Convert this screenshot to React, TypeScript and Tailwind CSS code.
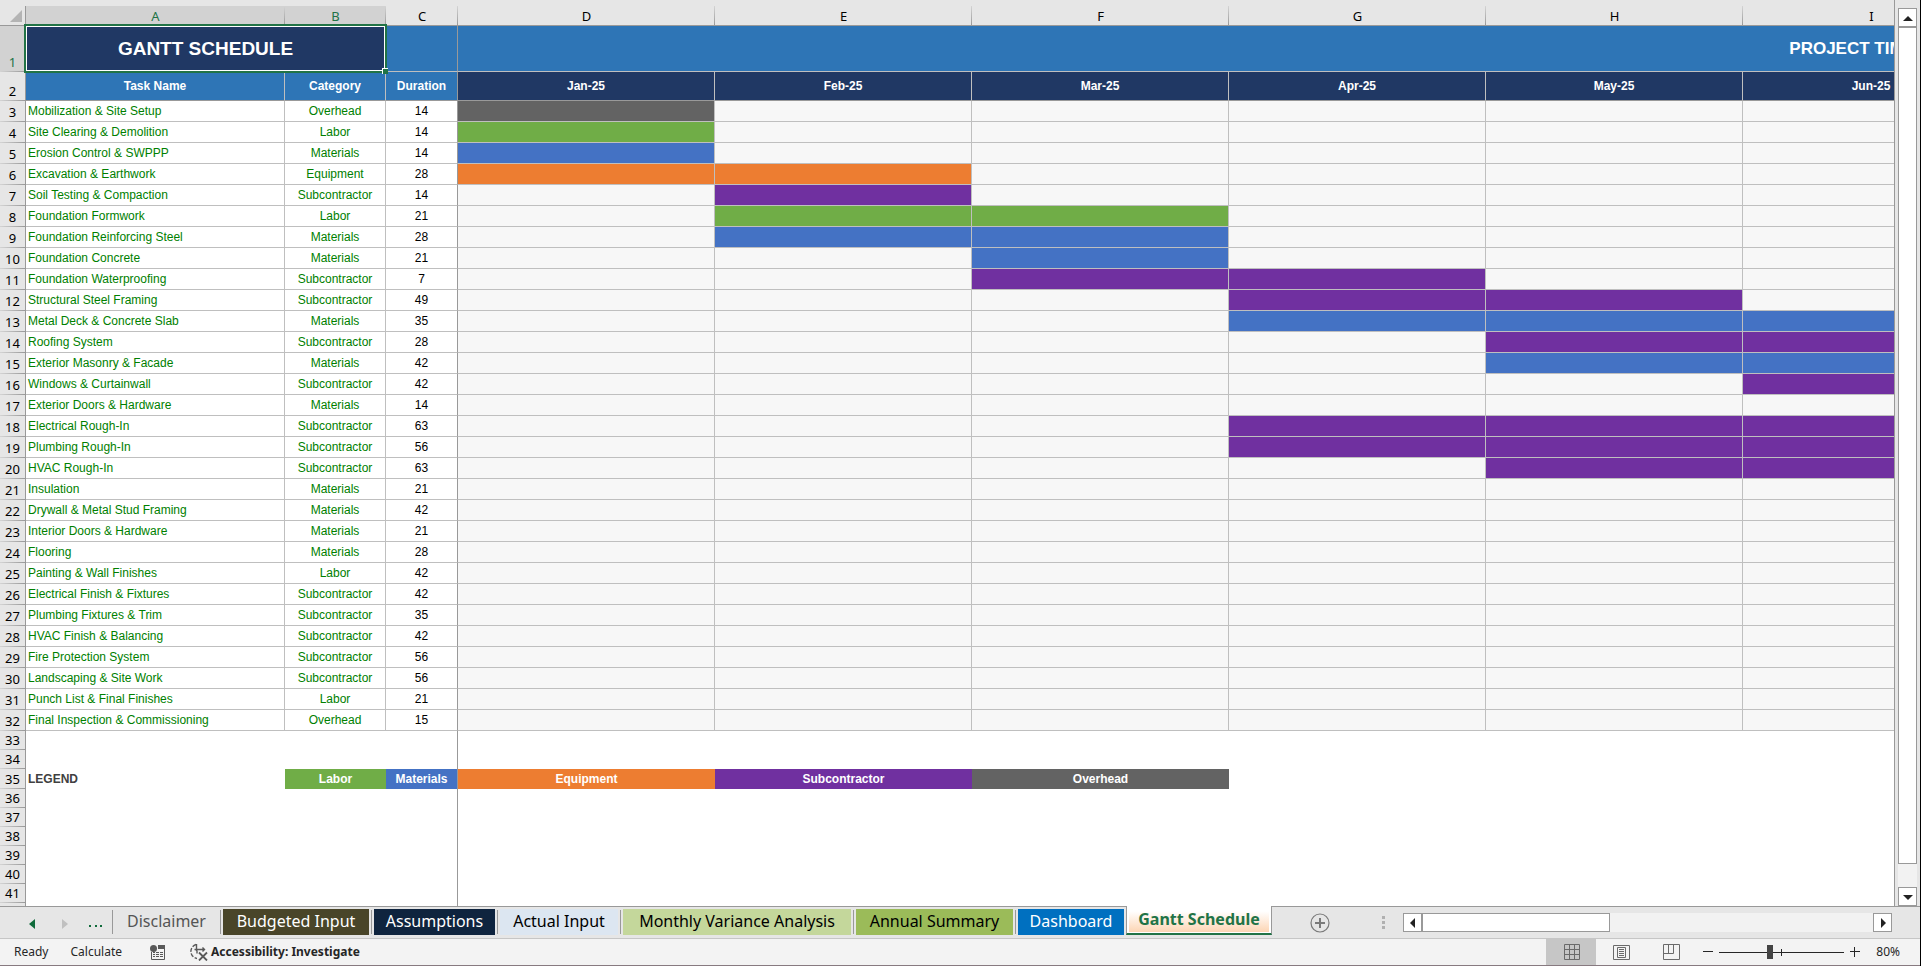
import type { ReactNode } from "react"
import { clsx } from "clsx"

type Category = "Labor" | "Materials" | "Equipment" | "Subcontractor" | "Overhead"

type Task = {
  name: string
  category: Category
  duration: number
  // first and last month column that the bar covers
  bar?: [number, number]
}

const fills: Record<Category, string> = {
  Labor: "bg-[#70ad47]",
  Materials: "bg-[#4472c4]",
  Equipment: "bg-[#ed7d31]",
  Subcontractor: "bg-[#7030a0]",
  Overhead: "bg-[#636363]",
}

const months = ["Jan-25", "Feb-25", "Mar-25", "Apr-25", "May-25", "Jun-25"]
const columns = ["A", "B", "C", "D", "E", "F", "G", "H", "I"]

const tasks: Task[] = [
  { name: "Mobilization & Site Setup", category: "Overhead", duration: 14, bar: [0, 0] },
  { name: "Site Clearing & Demolition", category: "Labor", duration: 14, bar: [0, 0] },
  { name: "Erosion Control & SWPPP", category: "Materials", duration: 14, bar: [0, 0] },
  { name: "Excavation & Earthwork", category: "Equipment", duration: 28, bar: [0, 1] },
  { name: "Soil Testing & Compaction", category: "Subcontractor", duration: 14, bar: [1, 1] },
  { name: "Foundation Formwork", category: "Labor", duration: 21, bar: [1, 2] },
  { name: "Foundation Reinforcing Steel", category: "Materials", duration: 28, bar: [1, 2] },
  { name: "Foundation Concrete", category: "Materials", duration: 21, bar: [2, 2] },
  { name: "Foundation Waterproofing", category: "Subcontractor", duration: 7, bar: [2, 3] },
  { name: "Structural Steel Framing", category: "Subcontractor", duration: 49, bar: [3, 4] },
  { name: "Metal Deck & Concrete Slab", category: "Materials", duration: 35, bar: [3, 5] },
  { name: "Roofing System", category: "Subcontractor", duration: 28, bar: [4, 5] },
  { name: "Exterior Masonry & Facade", category: "Materials", duration: 42, bar: [4, 5] },
  { name: "Windows & Curtainwall", category: "Subcontractor", duration: 42, bar: [5, 5] },
  { name: "Exterior Doors & Hardware", category: "Materials", duration: 14 },
  { name: "Electrical Rough-In", category: "Subcontractor", duration: 63, bar: [3, 5] },
  { name: "Plumbing Rough-In", category: "Subcontractor", duration: 56, bar: [3, 5] },
  { name: "HVAC Rough-In", category: "Subcontractor", duration: 63, bar: [4, 5] },
  { name: "Insulation", category: "Materials", duration: 21 },
  { name: "Drywall & Metal Stud Framing", category: "Materials", duration: 42 },
  { name: "Interior Doors & Hardware", category: "Materials", duration: 21 },
  { name: "Flooring", category: "Materials", duration: 28 },
  { name: "Painting & Wall Finishes", category: "Labor", duration: 42 },
  { name: "Electrical Finish & Fixtures", category: "Subcontractor", duration: 42 },
  { name: "Plumbing Fixtures & Trim", category: "Subcontractor", duration: 35 },
  { name: "HVAC Finish & Balancing", category: "Subcontractor", duration: 42 },
  { name: "Fire Protection System", category: "Subcontractor", duration: 56 },
  { name: "Landscaping & Site Work", category: "Subcontractor", duration: 56 },
  { name: "Punch List & Final Finishes", category: "Labor", duration: 21 },
  { name: "Final Inspection & Commissioning", category: "Overhead", duration: 15 },
]

const tabs = [
  { name: "Disclaimer", style: "w-[103px] text-[#555]" },
  { name: "Budgeted Input", style: "w-[146px] bg-[#494529] text-white" },
  { name: "Assumptions", style: "w-[121px] bg-[#0f243e] text-white" },
  { name: "Actual Input", style: "w-[118px] bg-[#dce6f1] text-black" },
  { name: "Monthly Variance Analysis", style: "w-[228px] bg-[#c4d79b] text-black" },
  { name: "Annual Summary", style: "w-[157px] bg-[#9bbb59] text-black" },
  { name: "Dashboard", style: "w-[106px] bg-[#0070c0] text-white" },
]

function RowHead({ n, active }: { n?: number; active?: boolean }) {
  return (
    <th
      scope="row"
      className={clsx(
        "border-r border-[#999] bg-[linear-gradient(to_right,#d4d4d4,#999)] bg-[length:100%_1px] bg-bottom bg-no-repeat p-0 pb-px align-bottom font-['Noto_Sans',sans-serif] text-[13px] leading-[18px] font-normal",
        active ? "bg-[#d2d2d2] text-[#217346]" : "bg-[#e6e6e6] text-black"
      )}
    >
      {n}
    </th>
  )
}

function EmptyRow({ n }: { n?: number }) {
  return (
    <tr className="h-[19px]">
      <RowHead n={n} />
      <td colSpan={3} className="border-r border-[#999] p-0" />
      <td colSpan={6} className="p-0" />
    </tr>
  )
}

function Sheet() {
  return (
    <table className="w-[2000px] table-fixed border-separate border-spacing-0 bg-white text-center text-xs leading-4">
      <colgroup>
        <col className="w-[26px]" />
        <col className="w-[259px]" />
        <col className="w-[101px]" />
        <col className="w-[72px]" />
        {months.map((m) => (
          <col key={m} className="w-[257px]" />
        ))}
      </colgroup>
      <thead>
        <tr className="h-5 font-['Noto_Sans',sans-serif] text-[13px]">
          <td className="border-r border-b border-[#999] bg-[#e6e6e6] p-0">
            <svg viewBox="0 0 12 12" className="ml-auto mr-[3px] size-3" fill="#b4b4b4">
              <path d="M12 0v12H0z" />
            </svg>
          </td>
          {columns.map((c, i) => (
            <th
              key={c}
              scope="col"
              className={clsx(
                "border-b border-[#999] bg-[linear-gradient(to_bottom,#d4d4d4,#999)] bg-[length:1px_100%] bg-right bg-no-repeat p-0 font-normal",
                i < 2 ? "bg-[#d2d2d2] text-[#217346]" : "bg-[#e6e6e6] text-black"
              )}
            >
              {c}
            </th>
          ))}
        </tr>
      </thead>
      <tbody>
        <tr className="h-[46px] text-white">
          <RowHead n={1} active />
          <td colSpan={2} className="relative border-r border-b border-[#bfbfbf] bg-[#203864] p-0 text-[19px] font-bold">
            GANTT SCHEDULE
            {/* selection frame and fill handle */}
            <div className="absolute -inset-0.5 z-10 border-2 border-[#217346]">
              <div className="absolute inset-0 border border-white" />
              <div className="absolute -right-[3px] -bottom-[3px] size-1.5 border-t border-l border-white bg-[#217346]" />
            </div>
          </td>
          <td className="border-r border-b border-r-[#999] border-b-[#bfbfbf] bg-[#2e75b6] p-0" />
          <td colSpan={5} className="border-b border-[#bfbfbf] bg-[#2e75b6] p-0" />
          <td className="border-b border-[#bfbfbf] bg-[#2e75b6] p-0 text-[17px] font-bold">PROJECT TIMELINE</td>
        </tr>
        <tr className="h-[29px] font-bold text-white">
          <RowHead n={2} />
          <td className="border-r border-b border-r-[#bfbfbf] border-b-[#999] bg-[#2e75b6] p-0">Task Name</td>
          <td className="border-r border-b border-r-[#bfbfbf] border-b-[#999] bg-[#2e75b6] p-0">Category</td>
          <td className="border-r border-b border-[#999] bg-[#2e75b6] p-0">Duration</td>
          {months.map((m) => (
            <td key={m} className="border-r border-b border-r-[#bfbfbf] border-b-[#999] bg-[#203864] p-0">
              {m}
            </td>
          ))}
        </tr>
        {tasks.map((t, row) => (
          <tr key={t.name} className="h-[21px]">
            <RowHead n={row + 3} />
            <td className="border-r border-b border-[#bfbfbf] p-0 pl-0.5 text-left text-[#008000]">{t.name}</td>
            <td className="border-r border-b border-[#bfbfbf] p-0 text-[#008000]">{t.category}</td>
            <td className="border-r border-b border-r-[#999] border-b-[#bfbfbf] p-0 text-black">{t.duration}</td>
            {months.map((m, i) => (
              <td
                key={m}
                className={clsx(
                  "border-r border-b border-[#bfbfbf] p-0",
                  t.bar && i >= t.bar[0] && i <= t.bar[1] ? fills[t.category] : "bg-[#f7f7f7]"
                )}
              />
            ))}
          </tr>
        ))}
        <EmptyRow n={33} />
        <EmptyRow n={34} />
        <tr className="h-5 font-bold text-white">
          <RowHead n={35} />
          <td className="p-0 pl-0.5 text-left text-[#404040]">LEGEND</td>
          <td className="bg-[#70ad47] p-0">Labor</td>
          <td className="border-r border-[#999] bg-[#4472c4] p-0">Materials</td>
          <td className="bg-[#ed7d31] p-0">Equipment</td>
          <td className="bg-[#7030a0] p-0">Subcontractor</td>
          <td className="bg-[#636363] p-0">Overhead</td>
          <td colSpan={3} className="p-0" />
        </tr>
        {[36, 37, 38, 39, 40, 41].map((n) => (
          <EmptyRow key={n} n={n} />
        ))}
        <EmptyRow />
      </tbody>
    </table>
  )
}

function ScrollButton({ label, d }: { label: string; d: string }) {
  return (
    <button aria-label={label} className="flex size-[19px] shrink-0 items-center justify-center border border-[#999] bg-white">
      <svg viewBox="0 0 10 10" className="size-2.5" fill="#222">
        <path d={d} />
      </svg>
    </button>
  )
}

function VerticalScroll() {
  return (
    <div className="flex w-[26px] flex-col border-l border-[#999] bg-[#e6e6e6] pt-2 pl-[3px]">
      <ScrollButton label="Scroll up" d="M0 8 5 3l5 5z" />
      <div className="flex w-[19px] flex-1 flex-col bg-[#f2f2f2] pb-[23px]">
        <div className="flex-1 border border-[#999] bg-white" />
      </div>
      <ScrollButton label="Scroll down" d="M0 3h10L5 8z" />
    </div>
  )
}

function Divider() {
  return <span className="mx-0.5 mt-[3px] h-6 w-px shrink-0 bg-[#999]" />
}

function TabBar() {
  return (
    <div className="flex h-8 shrink-0 border-t border-[#999] bg-[#e6e6e6] text-base leading-6">
      <div className="flex w-[110px] shrink-0 items-center pt-0.5 pl-[29px]">
        <button aria-label="Previous sheets">
          <svg viewBox="0 0 6 10" className="h-2.5 w-1.5" fill="#0f6b3b">
            <path d="M6 0v10L0 5z" />
          </svg>
        </button>
        <button aria-label="Next sheets" className="ml-[27px]">
          <svg viewBox="0 0 6 10" className="h-2.5 w-1.5" fill="#c0c0c0">
            <path d="M0 0v10l6-5z" />
          </svg>
        </button>
        <button aria-label="More sheets" className="ml-[21px]">
          <svg viewBox="0 0 14 10" className="h-2.5 w-3.5" fill="#0f6b3b">
            <path d="M0 6h2v2H0zM6 6h2v2H6zM11 6h2v2h-2z" />
          </svg>
        </button>
      </div>
      {tabs.map((t) => (
        <div key={t.name} className="flex shrink-0">
          <Divider />
          <button className={clsx("mt-0.5 h-[26px] pb-1 whitespace-nowrap", t.style)}>{t.name}</button>
        </div>
      ))}
      <button className="-mt-px ml-0.5 h-[29px] w-[146px] shrink-0 border-x border-b-2 border-x-[#999] border-b-[#217346] bg-white px-0.5 pb-px font-bold whitespace-nowrap text-[#217346]">
        <span className="block bg-linear-to-b from-white from-20% to-[#fcd5b4] py-px">Gantt Schedule</span>
      </button>
      <button aria-label="New sheet" className="ml-[38px] shrink-0">
        <svg viewBox="0 0 20 20" className="size-5" fill="none" stroke="#7a7a7a">
          <circle cx="10" cy="10" r="9" strokeWidth="1.2" />
          <path d="M10 5v10M5 10h10" strokeWidth="2" />
        </svg>
      </button>
      <svg viewBox="0 0 4 14" className="mt-[9px] ml-[52px] h-3.5 w-1 shrink-0" fill="#b0b0b0">
        <path d="M0 0h3v3H0zM0 5h3v3H0zM0 10h3v3H0z" />
      </svg>
      <div className="mt-1.5 mr-7 ml-[17px] flex h-[19px] flex-1 bg-[#f2f2f2]">
        <ScrollButton label="Scroll left" d="M7 0v10L2 5z" />
        <div className="w-[188px] border border-[#999] bg-white" />
        <div className="flex-1" />
        <ScrollButton label="Scroll right" d="M3 0v10l5-5z" />
      </div>
    </div>
  )
}

function ViewButton({ label, active, children }: { label: string; active?: boolean; children: ReactNode }) {
  return (
    <button
      aria-label={label}
      className={clsx("flex h-full w-[50px] items-center justify-center", active && "bg-[#c6c6c6]")}
    >
      <svg viewBox="0 0 17 16" className="h-4 w-[17px]" fill="none" stroke="#6a6a6a">
        {children}
      </svg>
    </button>
  )
}

function StatusBar() {
  return (
    <div className="flex h-7 shrink-0 items-center border-t border-b border-t-[#c6c6c6] border-b-[#877a80] bg-[#f3f3f3] text-xs text-[#262626]">
      <span className="ml-3.5">Ready</span>
      <span className="ml-[22px]">Calculate</span>
      <button aria-label="Record macro" className="ml-7">
        <svg viewBox="0 0 15 15" className="size-[15px]" fill="none" stroke="#595959">
          <path d="M1.500 7v7.500h13V1.500" />
          <path d="M8 0h7v4H8z" fill="#595959" stroke="none" />
          <circle cx="3.500" cy="3.500" r="3.500" fill="#595959" stroke="none" />
          <path d="M3 7.500h2M6 7.500h3M10 7.500h3M3 9.500h2M6 9.500h3M10 9.500h3M3 11.500h2M6 11.500h3M10 11.500h3" />
        </svg>
      </button>
      <button className="ml-6 flex items-center gap-[3px] font-bold">
        <svg viewBox="0 0 19 18" className="h-[18px] w-[19px]" fill="none" stroke="#595959" strokeWidth="1.400">
          <path d="M7 1.500A7.200 7.200 0 0 0 8 15.500" strokeDasharray="4 1.500" />
          <path d="M7.500 1v7M5.500 6.500h10M13.500 4.500l2 2-2 2M8 7.500v3" />
          <path d="M10 9.500l8 8M18 9.500l-8 8" strokeWidth="1.800" />
        </svg>
        Accessibility: Investigate
      </button>
      <div className="ml-auto flex h-full items-center">
        <ViewButton label="Normal" active>
          <path d="M1.500 .5h15v15h-15zM6.500 .5v15M11.500 .5v15M1.500 5.500h15M1.500 10.500h15" />
        </ViewButton>
        <ViewButton label="Page layout">
          <path d="M.5 1.500h16v14H.5zM4.500 3.500h8v10h-8zM6 5.500h5M6 7.500h5M6 9.500h5M6 11.500h5" />
        </ViewButton>
        <ViewButton label="Page break preview">
          <path d="M.5 .5h16v15H.5zM.5 9.500h10V.5M5.500 .5v9" />
        </ViewButton>
        <button aria-label="Zoom out" className="ml-[7px]">
          <svg viewBox="0 0 10 10" className="size-2.5" stroke="#262626">
            <path d="M0 4.500h10" />
          </svg>
        </button>
        <div className="relative ml-1.5 flex h-full w-[125px] items-center">
          <span className="absolute top-2.5 left-[62px] h-[7px] w-px bg-[#262626]" />
          <input
            type="range"
            aria-label="Zoom"
            min={0}
            max={100}
            defaultValue={40}
            className="relative m-0 h-3.5 w-full appearance-none bg-[linear-gradient(#262626,#262626)] bg-[length:100%_1px] bg-center bg-no-repeat [&::-webkit-slider-thumb]:h-3.5 [&::-webkit-slider-thumb]:w-1.5 [&::-webkit-slider-thumb]:appearance-none [&::-webkit-slider-thumb]:bg-[#444]"
          />
        </div>
        <button aria-label="Zoom in" className="ml-1.5">
          <svg viewBox="0 0 10 10" className="size-2.5" stroke="#262626">
            <path d="M0 4.500h10M4.500 0v10" />
          </svg>
        </button>
        <span className="mr-5 ml-4">80%</span>
      </div>
    </div>
  )
}

function App() {
  return (
    <div className="flex h-screen flex-col overflow-hidden border-r border-black bg-[#e6e6e6] font-['Noto_Sans',sans-serif]">
      <div className="flex min-h-0 flex-1">
        <div className="min-w-0 flex-1 overflow-hidden pt-1.5 font-['Liberation_Sans',Arial,sans-serif]">
          <Sheet />
        </div>
        <VerticalScroll />
      </div>
      <TabBar />
      <StatusBar />
    </div>
  )
}

export default App
